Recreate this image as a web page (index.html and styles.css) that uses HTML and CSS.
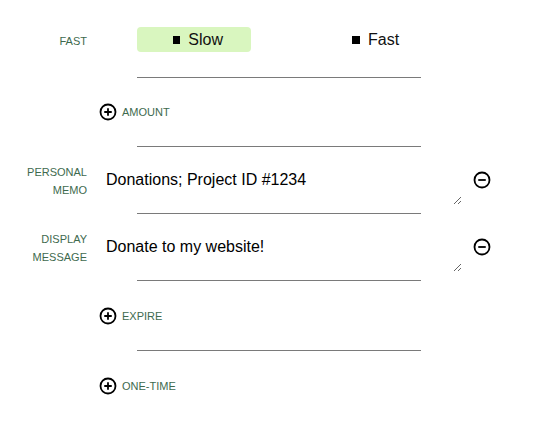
FILE: index.html
```html
<!DOCTYPE html>
<html>
<head>
<meta charset="utf-8">
<link rel="stylesheet" href="styles.css">
</head>
<body>
<div class="form">
  <div class="row row-toggle">
    <div class="label">FAST</div>
    <div class="content">
      <div class="toggle">
        <button class="opt opt-active"><span class="sq"></span>Slow</button>
        <button class="opt opt-fast"><span class="sq"></span>Fast</button>
      </div>
    </div>
  </div>
  <div class="divider"></div>

  <div class="row row-add">
    <div class="label"></div>
    <div class="content">
      <button class="add">
        <svg class="icon" viewBox="0 0 24 24"><circle cx="12" cy="12" r="10"/><path d="M12 7v10M7 12h10"/></svg>
        <span class="add-text">AMOUNT</span>
      </button>
    </div>
  </div>
  <div class="divider"></div>

  <div class="row row-text">
    <div class="label">PERSONAL<br>MEMO</div>
    <div class="content content-text">
      <textarea class="ta">Donations; Project ID #1234</textarea>
      <button class="remove">
        <svg class="icon" viewBox="0 0 24 24"><circle cx="12" cy="12" r="10"/><path d="M7 12h10"/></svg>
      </button>
    </div>
  </div>
  <div class="divider"></div>

  <div class="row row-text">
    <div class="label">DISPLAY<br>MESSAGE</div>
    <div class="content content-text">
      <textarea class="ta">Donate to my website!</textarea>
      <button class="remove">
        <svg class="icon" viewBox="0 0 24 24"><circle cx="12" cy="12" r="10"/><path d="M7 12h10"/></svg>
      </button>
    </div>
  </div>
  <div class="divider"></div>

  <div class="row row-add row-add-low">
    <div class="label"></div>
    <div class="content">
      <button class="add">
        <svg class="icon" viewBox="0 0 24 24"><circle cx="12" cy="12" r="10"/><path d="M12 7v10M7 12h10"/></svg>
        <span class="add-text">EXPIRE</span>
      </button>
    </div>
  </div>
  <div class="divider"></div>

  <div class="row row-add row-add-low">
    <div class="label"></div>
    <div class="content">
      <button class="add">
        <svg class="icon" viewBox="0 0 24 24"><circle cx="12" cy="12" r="10"/><path d="M12 7v10M7 12h10"/></svg>
        <span class="add-text">ONE&#8209;TIME</span>
      </button>
    </div>
  </div>
</div>
</body>
</html>
```

FILE: styles.css
```css
html, body {
  margin: 0;
  padding: 0;
  background: #ffffff;
}

body {
  font-family: "Liberation Sans", Arial, sans-serif;
  color: #111;
}

.form {
  width: 559px;
}

.row {
  display: grid;
  grid-template-columns: 87px 1fr;
  column-gap: 13px;
}

.label {
  text-align: right;
  font-size: 11px;
  line-height: 18px;
  color: #3e6a4e;
}

.row-toggle {
  padding: 27px 0 25px;
  align-items: center;
}

.row-toggle .label {
  padding-top: 2px;
}

.toggle {
  display: flex;
  margin-left: 37px;
  gap: 65px;
}

.opt {
  display: flex;
  align-items: center;
  height: 25px;
  padding: 0 28px 0 36px;
  border: none;
  border-radius: 4px;
  background: transparent;
  font-family: "Liberation Sans", Arial, sans-serif;
  font-size: 16px;
  color: #111;
  cursor: pointer;
}

.opt-active {
  width: 114px;
  background: #d9f6bf;
}

.sq {
  display: inline-block;
  width: 8px;
  height: 8px;
  background: #000;
  margin-right: 8px;
}

.divider {
  margin-left: 137px;
  width: 284px;
  height: 1px;
  background: #7a7a7a;
}

.row-add {
  padding: 25px 0 25px;
  align-items: center;
}

.row-add-low {
  padding: 26px 0 25px;
}

.add {
  display: flex;
  align-items: center;
  gap: 5px;
  padding: 0;
  margin-left: -1px;
  border: none;
  background: transparent;
  cursor: pointer;
}

.add-text {
  font-family: "Liberation Sans", Arial, sans-serif;
  font-size: 11px;
  color: #3e6a4e;
  line-height: 17px;
}

.icon {
  width: 18px;
  height: 18px;
  display: block;
  fill: none;
  stroke: #000;
  stroke-width: 2.4;
  stroke-linecap: butt;
}

.row-text {
  padding: 16px 0 8px;
  align-items: start;
}

.content-text {
  display: flex;
  align-items: flex-start;
  gap: 11px;
}

.ta {
  margin-top: 4px;
  width: 362px;
  height: 38px;
  box-sizing: border-box;
  padding: 4px 6px;
  border: none;
  outline: none;
  background: transparent;
  font-family: "Liberation Sans", Arial, sans-serif;
  font-size: 16px;
  color: #000;
  resize: both;
  overflow: hidden;
}

.remove {
  margin-top: 8px;
  padding: 0;
  border: none;
  background: transparent;
  cursor: pointer;
}
```
